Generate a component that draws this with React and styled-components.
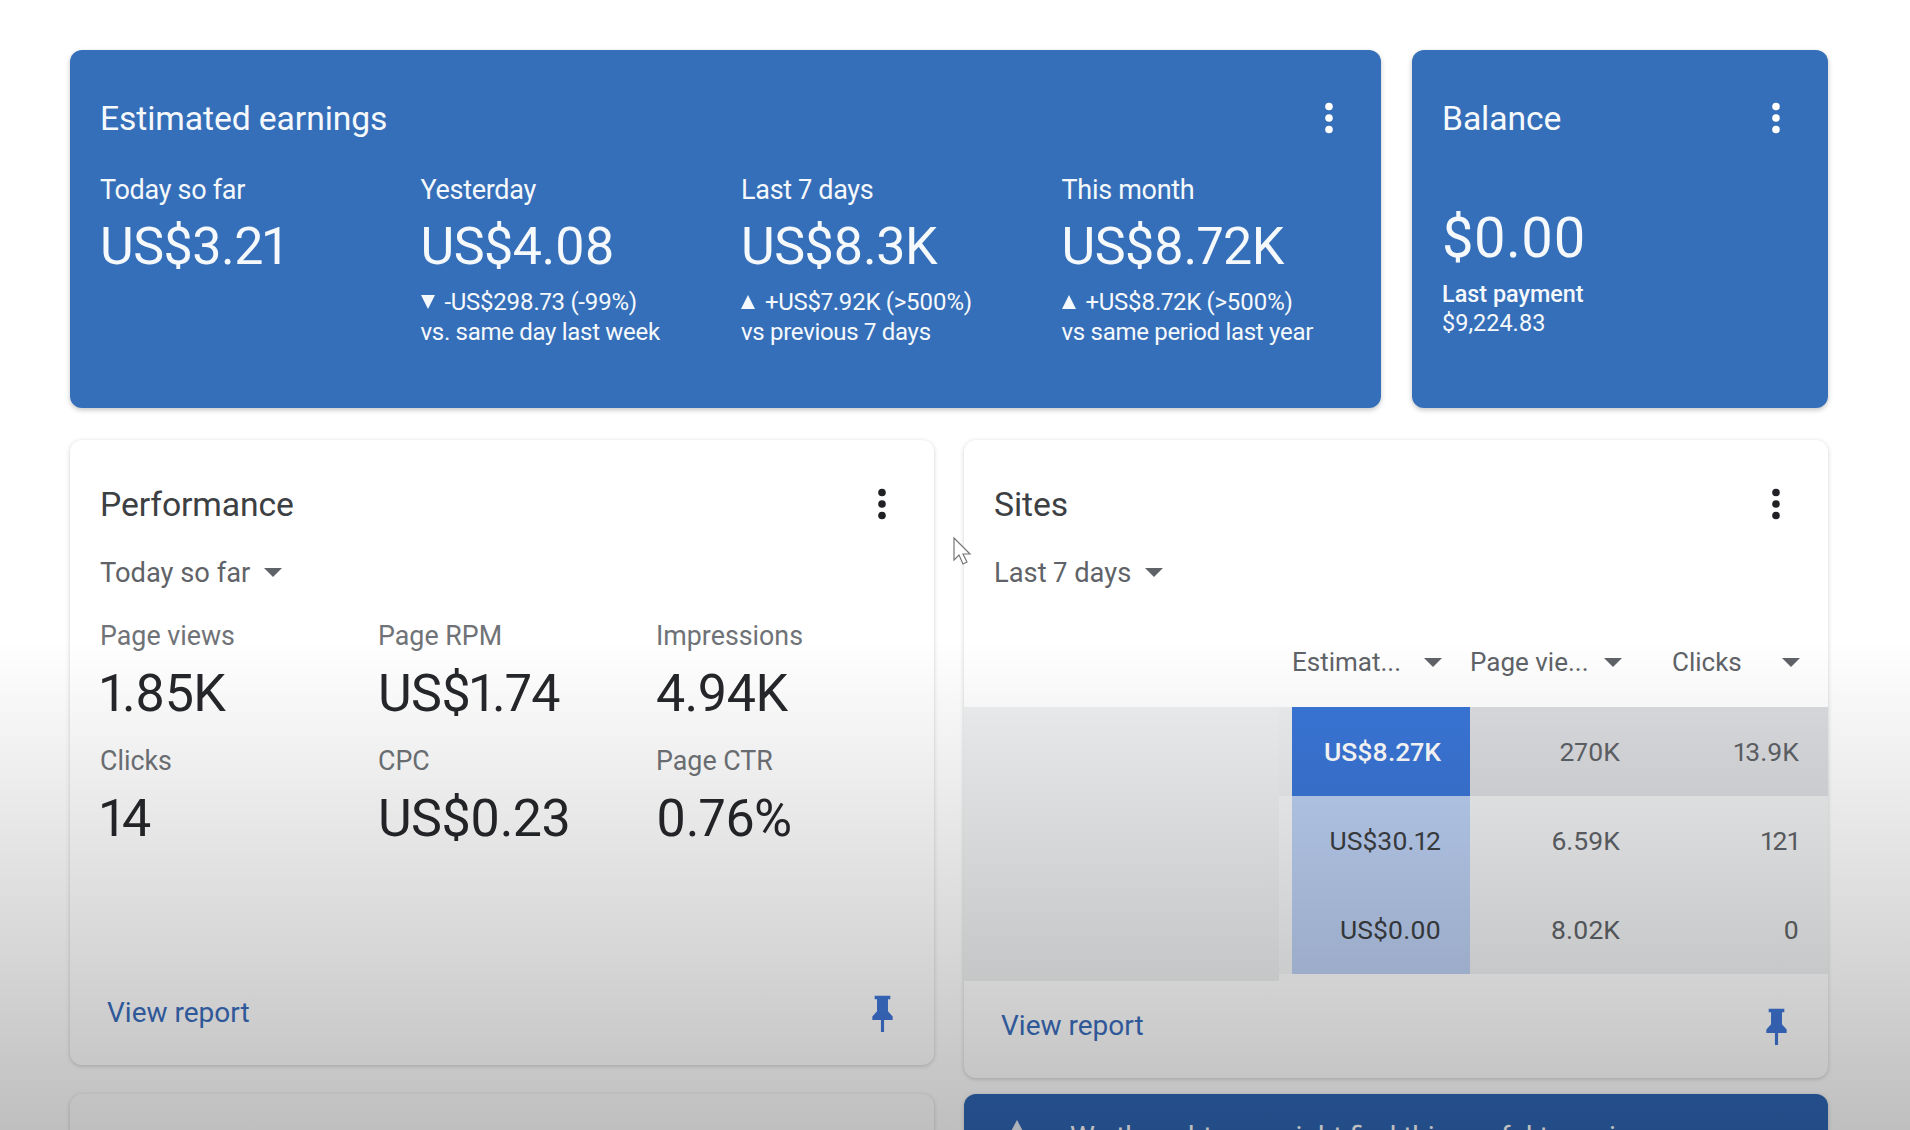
import React from "react";
import styled, { createGlobalStyle } from "styled-components";

const Global = createGlobalStyle`
  html, body { margin: 0; padding: 0; background: #fff; }
  body { font-family: Roboto, "Liberation Sans", sans-serif; font-variant-numeric: proportional-nums; }
`;

const Page = styled.div`
  position: relative;
  width: 1910px;
  height: 1130px;
  overflow: hidden;
  background: #fff;
  box-sizing: border-box;
  padding: 50px 82px 0 70px;
  display: grid;
  grid-template-columns: 864px 864px;
  column-gap: 30px;
  align-content: start;
  align-items: start;
`;

const TopRow = styled.div`
  grid-column: 1 / 3;
  display: grid;
  grid-template-columns: 1311px 416px;
  column-gap: 31px;
  margin-bottom: 32px;
`;

const BlueCard = styled.section`
  height: 358px;
  box-sizing: border-box;
  background: #356fb9;
  border-radius: 12px;
  color: #f6f9fc;
  padding: 0 30px;
  box-shadow: 0 2px 5px rgba(60, 64, 67, 0.3);
`;

const Card = styled.section`
  height: ${(p) => p.$h}px;
  box-sizing: border-box;
  background: #fff;
  border-radius: 12px;
  color: #3c4043;
  display: flex;
  flex-direction: column;
  box-shadow: 0 1px 4px rgba(60, 64, 67, 0.25);
`;

const Header = styled.div`
  height: 48px;
  margin-top: ${(p) => p.$top}px;
  display: flex;
  align-items: center;
  justify-content: space-between;
  padding: ${(p) => (p.$inset ? "0 30px" : "0")};
`;

const Title = styled.h2`
  margin: 0;
  font-size: 33.7px;
  font-weight: 400;
  letter-spacing: -0.1px;
  color: inherit;
`;

const MenuButton = styled.span`
  display: inline-flex;
  width: 32px;
  justify-content: center;
  margin-right: 6px;
  color: #202124;
`;

const LightMenu = styled(MenuButton)`
  color: #fff;
`;

const Dots = () => (
  <svg width="10" height="32" viewBox="0 0 10 32" fill="currentColor" aria-hidden="true">
    <circle cx="5" cy="4.5" r="3.8" />
    <circle cx="5" cy="16" r="3.8" />
    <circle cx="5" cy="27.5" r="3.8" />
  </svg>
);

const EarningsGrid = styled.div`
  display: grid;
  grid-template-columns: repeat(4, 320.5px);
  margin-top: 30.5px;
`;

const EarnLabel = styled.div`
  font-size: 27px;
  line-height: 34px;
  letter-spacing: -0.3px;
`;

const EarnValue = styled.div`
  font-size: 52px;
  line-height: 62px;
  margin-top: 9.5px;
  letter-spacing: -0.5px;
`;

const Delta = styled.div`
  display: flex;
  align-items: center;
  gap: 10px;
  font-size: 24px;
  line-height: 30px;
  margin-top: 8.5px;
  letter-spacing: -0.3px;
  & + div { margin-top: 0; }
`;

const Trend = styled.span`
  width: 0;
  height: 0;
  border-left: 7.5px solid transparent;
  border-right: 7.5px solid transparent;
  border-top: ${(p) => (p.$down ? "14px solid #f6f9fc" : "0")};
  border-bottom: ${(p) => (p.$down ? "0" : "14px solid #f6f9fc")};
`;

const BalanceValue = styled.div`
  font-size: 56px;
  line-height: 62px;
  margin-top: 65px;
`;

const BalanceNote = styled.div`
  font-size: 23.4px;
  line-height: 29px;
  margin-top: 11px;
  font-weight: 500;
  & + div { margin-top: 0; font-weight: 400; }
`;

const Selector = styled.div`
  display: flex;
  align-items: center;
  gap: 14px;
  font-size: 27.3px;
  line-height: 34px;
  color: #5f6368;
  margin-top: 27.5px;
  padding-left: 30px;
`;

const Caret = styled.span`
  display: inline-block;
  width: 0;
  height: 0;
  border-left: 9.5px solid transparent;
  border-right: 9.5px solid transparent;
  border-top: 9.5px solid #5f6368;
`;

const Metrics = styled.div`
  display: grid;
  grid-template-columns: repeat(3, 278px);
  padding-left: 30px;
  margin-top: 29.5px;
  row-gap: 18.6px;
`;

const MetricLabel = styled.div`
  font-size: 26.8px;
  line-height: 34px;
  color: #6f7377;
`;

const MetricValue = styled.div`
  font-size: 52px;
  line-height: 62px;
  margin-top: 10px;
  font-weight: 400;
  letter-spacing: -0.6px;
  color: #26272a;
`;

const Footer = styled.div`
  margin-top: auto;
  display: flex;
  align-items: center;
  justify-content: space-between;
  padding: 0 30px 33px 37px;
`;

const ViewReport = styled.a`
  font-size: 28px;
  line-height: 34px;
  font-weight: 400;
  color: #3a6dbd;
`;

const Pin = () => (
  <svg width="25" height="38" viewBox="0 0 32 44" preserveAspectRatio="none" fill="#3f76d8" aria-hidden="true">
    <path d="M6 2h20v4h-3v14l6 6v4H18v14h-4V30H3v-4l6-6V6H6z" />
  </svg>
);

const Table = styled.div`
  margin-top: 37.4px;
`;

const TableHead = styled.div`
  display: grid;
  grid-template-columns: 328px 178px 202px 128px;
  height: 71px;
  padding-bottom: 9px;
  align-items: center;
  font-size: 26px;
  color: #5f6368;
`;

const HeadCell = styled.div`
  display: flex;
  align-items: center;
  justify-content: space-between;
  padding-right: ${(p) => p.$pr}px;
  white-space: nowrap;
`;

const Row = styled.div`
  display: grid;
  grid-template-columns: 315px 13px 178px 150px 179px 29px;
  height: 89px;
  align-items: stretch;
  background: ${(p) => p.$bg};
`;

const NameCell = styled.div`
  background: #eff0f1;
`;

const NameTail = styled.div`
  width: 315px;
  height: 7px;
  background: #eff0f1;
`;

const Gutter = styled.div`
  background: ${(p) => p.$bg};
`;

const HeatCell = styled.div`
  display: flex;
  align-items: center;
  justify-content: flex-end;
  padding-right: 29px;
  font-size: 26.5px;
  background: ${(p) => p.$bg};
  color: ${(p) => p.$fg};
  font-weight: ${(p) => p.$w || 400};
`;

const DataCell = styled.div`
  display: flex;
  align-items: center;
  justify-content: flex-end;
  font-size: 26.5px;
  color: #5f6368;
`;

const Stub = styled.section`
  height: 100px;
  margin-top: 16px;
  border-radius: 12px;
  background: ${(p) => p.$bg};
  color: #fff;
  box-shadow: 0 1px 4px rgba(60, 64, 67, 0.25);
  display: flex;
  align-items: flex-start;
  gap: 37px;
  padding: 26px 37px;
  box-sizing: border-box;
  font-size: 28px;
  line-height: 34px;
`;

const WarnIcon = () => (
  <svg width="32" height="30" viewBox="0 0 32 30" fill="#e6ecf5" aria-hidden="true">
    <path d="M16 0l16 30H0z" />
  </svg>
);

const Fade = styled.div`
  position: absolute;
  inset: 640px 0 0 0;
  pointer-events: none;
  background: linear-gradient(to bottom, rgba(0, 0, 0, 0), rgba(0, 0, 0, 0.25));
`;

const Cursor = styled.svg`
  position: absolute;
  left: 952px;
  top: 536px;
`;

const rows = [
  { v: "US$8.27K", p: "270K", c: "13.9K", bg: "#dcdde0", heat: "#3a76d8", fg: "#fff", gut: "#eceef0", w: 500 },
  { v: "US$30.12", p: "6.59K", c: "121", bg: "#f0f1f2", heat: "#bcd0f3", fg: "#3c4043", gut: "#f5f6f7" },
  { v: "US$0.00", p: "8.02K", c: "0", bg: "#f0f1f2", heat: "#bcd0f3", fg: "#3c4043", gut: "#f5f6f7" },
];

const Earning = ({ label, value, trend, d1, d2 }) => (
  <div>
    <EarnLabel>{label}</EarnLabel>
    <EarnValue>{value}</EarnValue>
    {d1 && <Delta><Trend $down={trend === "down"} />{d1}</Delta>}
    {d2 && <Delta>{d2}</Delta>}
  </div>
);

const Metric = ({ label, value }) => (
  <div>
    <MetricLabel>{label}</MetricLabel>
    <MetricValue>{value}</MetricValue>
  </div>
);

export default function App() {
  return (
    <Page>
      <Global />
      <TopRow>
        <BlueCard>
          <Header $top={44}>
            <Title>Estimated earnings</Title>
            <LightMenu><Dots /></LightMenu>
          </Header>
          <EarningsGrid>
            <Earning label="Today so far" value="US$3.21" />
            <Earning label="Yesterday" value="US$4.08" trend="down" d1="-US$298.73 (-99%)" d2="vs. same day last week" />
            <Earning label="Last 7 days" value="US$8.3K" trend="up" d1="+US$7.92K (>500%)" d2="vs previous 7 days" />
            <Earning label="This month" value="US$8.72K" trend="up" d1="+US$8.72K (>500%)" d2="vs same period last year" />
          </EarningsGrid>
        </BlueCard>
        <BlueCard>
          <Header $top={44}>
            <Title>Balance</Title>
            <LightMenu><Dots /></LightMenu>
          </Header>
          <BalanceValue>$0.00</BalanceValue>
          <BalanceNote>Last payment</BalanceNote>
          <BalanceNote>$9,224.83</BalanceNote>
        </BlueCard>
      </TopRow>

      <Card $h={625}>
        <Header $inset $top={40}>
          <Title>Performance</Title>
          <MenuButton><Dots /></MenuButton>
        </Header>
        <Selector>Today so far <Caret /></Selector>
        <Metrics>
          <Metric label="Page views" value="1.85K" />
          <Metric label="Page RPM" value="US$1.74" />
          <Metric label="Impressions" value="4.94K" />
          <Metric label="Clicks" value="14" />
          <Metric label="CPC" value="US$0.23" />
          <Metric label="Page CTR" value="0.76%" />
        </Metrics>
        <Footer>
          <ViewReport>View report</ViewReport>
          <MenuButton><Pin /></MenuButton>
        </Footer>
      </Card>

      <Card $h={638}>
        <Header $inset $top={40}>
          <Title>Sites</Title>
          <MenuButton><Dots /></MenuButton>
        </Header>
        <Selector>Last 7 days <Caret /></Selector>
        <Table>
          <TableHead>
            <span />
            <HeadCell $pr={28}>Estimat... <Caret /></HeadCell>
            <HeadCell $pr={50}>Page vie... <Caret /></HeadCell>
            <HeadCell $pr={0}>Clicks <Caret /></HeadCell>
          </TableHead>
          {rows.map((r) => (
            <Row key={r.v} $bg={r.bg}>
              <NameCell />
              <Gutter $bg={r.gut} />
              <HeatCell $bg={r.heat} $fg={r.fg} $w={r.w}>{r.v}</HeatCell>
              <DataCell>{r.p}</DataCell>
              <DataCell>{r.c}</DataCell>
            </Row>
          ))}
          <NameTail />
        </Table>
        <Footer>
          <ViewReport>View report</ViewReport>
          <MenuButton><Pin /></MenuButton>
        </Footer>
      </Card>

      <Stub $bg="#fff" />
      <Stub $bg="#2f66b4">
        <WarnIcon />
        <span>We thought you might find this useful to review</span>
      </Stub>

      <Fade />
      <Cursor width="20" height="32" viewBox="0 0 20 32" fill="#fff" stroke="#777" strokeWidth="1.2" aria-hidden="true">
        <path d="M2 2v22l5-5 4 9 4-2-4-8h7z" />
      </Cursor>
    </Page>
  );
}
